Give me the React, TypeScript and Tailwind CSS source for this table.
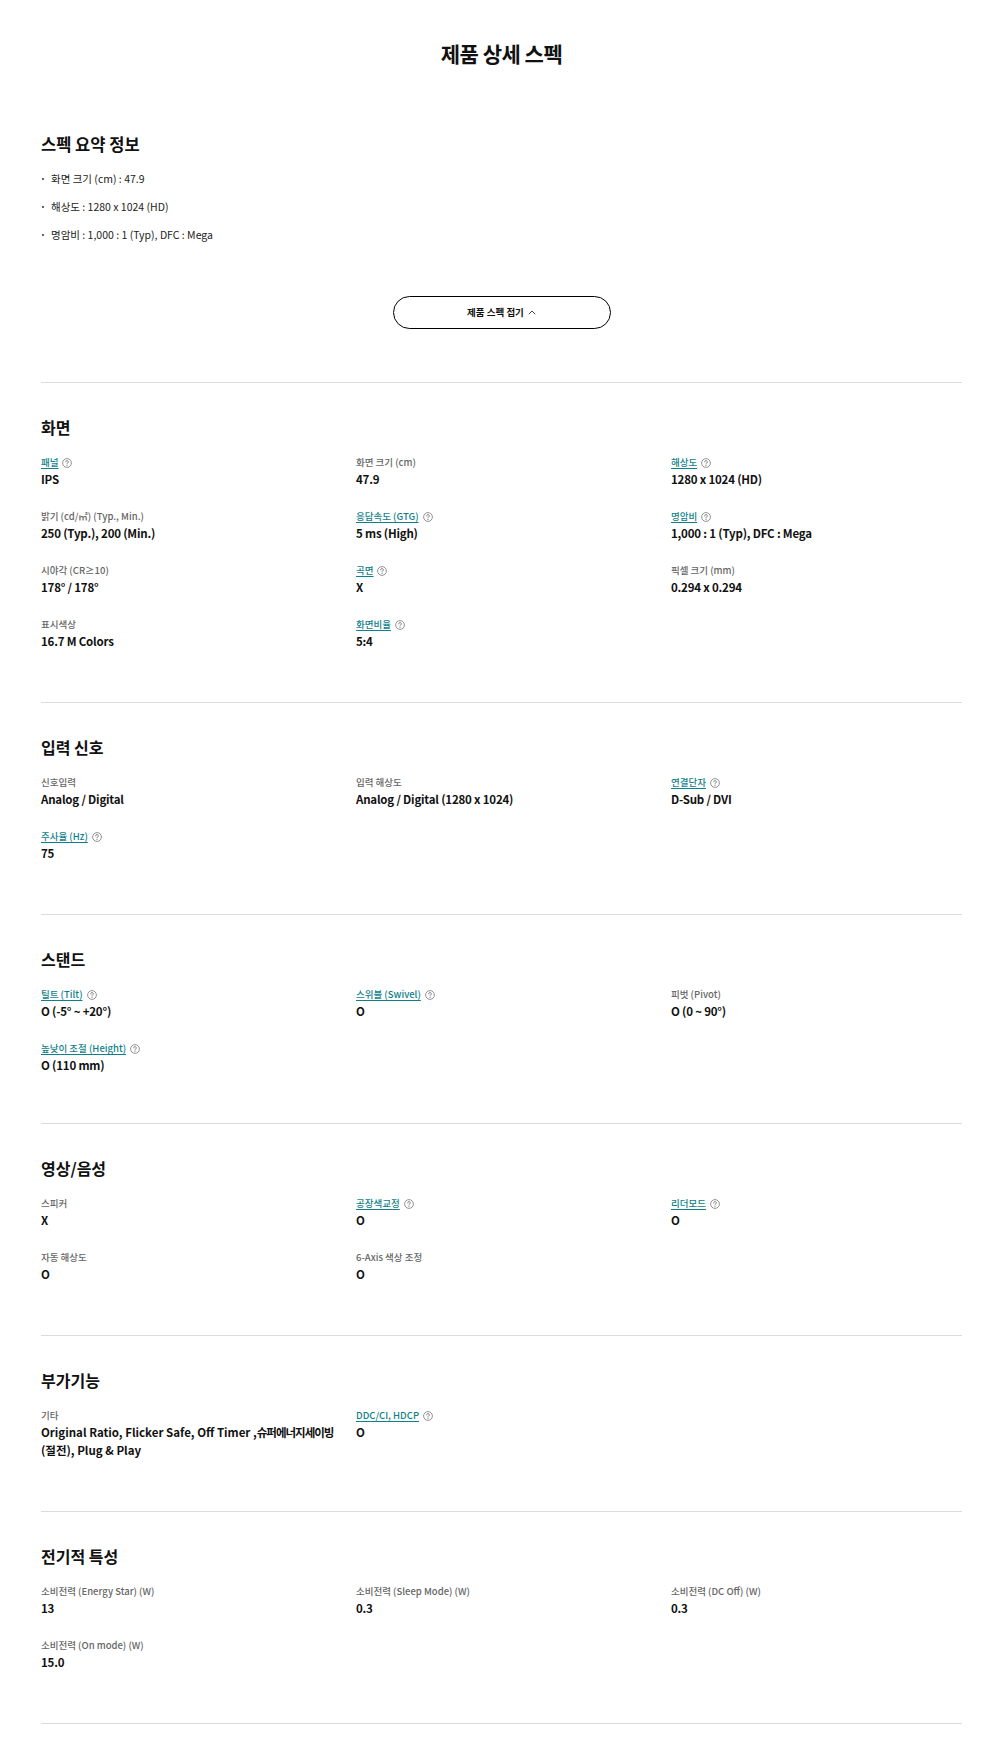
import React from 'react'

type Spec = {
  label: string
  value: string
  link?: boolean
  lines?: React.ReactNode[]
}

type Section = {
  title: string
  specs: Spec[]
  tight?: boolean
}

const summary = [
  '화면 크기 (cm) : 47.9',
  '해상도 : 1280 x 1024 (HD)',
  '명암비 : 1,000 : 1 (Typ), DFC : Mega',
]

const sections: Section[] = [
  {
    title: '화면',
    specs: [
      { label: '패널', value: 'IPS', link: true },
      { label: '화면 크기 (cm)', value: '47.9' },
      { label: '해상도', value: '1280 x 1024 (HD)', link: true },
      { label: '밝기 (cd/㎡) (Typ., Min.)', value: '250 (Typ.), 200 (Min.)' },
      { label: '응답속도 (GTG)', value: '5 ms (High)', link: true },
      { label: '명암비', value: '1,000 : 1 (Typ), DFC : Mega', link: true },
      { label: '시야각 (CR≥10)', value: '178° / 178°' },
      { label: '곡면', value: 'X', link: true },
      { label: '픽셀 크기 (mm)', value: '0.294 x 0.294' },
      { label: '표시색상', value: '16.7 M Colors' },
      { label: '화면비율', value: '5:4', link: true },
    ],
  },
  {
    title: '입력 신호',
    specs: [
      { label: '신호입력', value: 'Analog / Digital' },
      { label: '입력 해상도', value: 'Analog / Digital (1280 x 1024)' },
      { label: '연결단자', value: 'D-Sub / DVI', link: true },
      { label: '주사율 (Hz)', value: '75', link: true },
    ],
  },
  {
    title: '스탠드',
    tight: true,
    specs: [
      { label: '틸트 (Tilt)', value: 'O (-5° ~ +20°)', link: true },
      { label: '스위블 (Swivel)', value: 'O', link: true },
      { label: '피벗 (Pivot)', value: 'O (0 ~ 90°)' },
      { label: '높낮이 조절 (Height)', value: 'O (110 mm)', link: true },
    ],
  },
  {
    title: '영상/음성',
    specs: [
      { label: '스피커', value: 'X' },
      { label: '공장색교정', value: 'O', link: true },
      { label: '리더모드', value: 'O', link: true },
      { label: '자동 해상도', value: 'O' },
      { label: '6-Axis 색상 조정', value: 'O' },
    ],
  },
  {
    title: '부가기능',
    specs: [
      {
        label: '기타',
        value: '',
        lines: [
          <>
            Original Ratio, Flicker Safe, Off Timer ,<span className="tracking-[-1px]">슈퍼에너지세이빙</span>
          </>,
          '(절전), Plug & Play',
        ],
      },
      { label: 'DDC/CI, HDCP', value: 'O', link: true },
    ],
  },
  {
    title: '전기적 특성',
    specs: [
      { label: '소비전력 (Energy Star) (W)', value: '13' },
      { label: '소비전력 (Sleep Mode) (W)', value: '0.3' },
      { label: '소비전력 (DC Off) (W)', value: '0.3' },
      { label: '소비전력 (On mode) (W)', value: '15.0' },
    ],
  },
]

function HelpIcon() {
  return (
    <svg width="10" height="10" viewBox="0 0 10 10" fill="none" className="ml-[4px] shrink-0">
      <circle cx="5" cy="5" r="4.4" stroke="#777" strokeWidth="0.8" />
      <path d="M3.7 3.9a1.3 1.3 0 1 1 1.9 1.1c-.4.2-.6.4-.6.8v.2" stroke="#666" strokeWidth="0.8" strokeLinecap="round" />
      <circle cx="5" cy="7.4" r="0.5" fill="#666" />
    </svg>
  )
}

function SpecItem({ spec }: { spec: Spec }) {
  return (
    <div>
      <div className="flex items-center h-[15px] text-[9.5px] leading-[15px]">
        {spec.link ? (
          <span className="text-[#0f7f8a] underline underline-offset-[2px] font-medium">{spec.label}</span>
        ) : (
          <span className="text-[#666] font-medium">{spec.label}</span>
        )}
        {spec.link && <HelpIcon />}
      </div>
      {spec.lines ? (
        <div className="text-[11.5px] leading-[18px] font-bold text-[#111] whitespace-nowrap">
          {spec.lines.map((l, i) => (
            <div key={i} className="h-[18px]">
              {l}
            </div>
          ))}
        </div>
      ) : (
        <div className="h-[18px] text-[11.5px] leading-[18px] font-bold text-[#111] whitespace-nowrap tracking-[-0.2px]">
          {spec.value}
        </div>
      )}
    </div>
  )
}

export default function App() {
  return (
    <div
      className="min-h-[1744px] bg-white text-[#111] pl-[41px] pr-[38px] pt-[38px]"
      style={{ fontFamily: '"Noto Sans CJK KR", "Noto Sans", sans-serif' }}
    >
      {/* Title */}
      <h1 className="text-center text-[21px] leading-[30px] font-bold tracking-[-0.5px]">제품 상세 스펙</h1>

      {/* Summary */}
      <h2 className="mt-[63px] text-[16.5px] leading-[26px] font-bold">스펙 요약 정보</h2>
      <ul className="mt-[14px] flex flex-col gap-[12px]">
        {summary.map((s) => (
          <li key={s} className="flex items-center h-[16px] text-[10.5px] leading-[16px] text-[#222]">
            <span className="w-[2px] h-[2px] rounded-full bg-[#333] mr-[7px] ml-[1px]" />
            {s}
          </li>
        ))}
      </ul>

      <div className="flex justify-center mt-[53px]">
        <button className="w-[218px] h-[33px] rounded-full border border-black flex items-center justify-center gap-[4px] text-[9.5px] font-bold text-[#111]">
          제품 스펙 접기
          <svg width="8" height="5" viewBox="0 0 8 5" fill="none">
            <path d="M0.8 4.2L4 1L7.2 4.2" stroke="#333" strokeWidth="0.9" />
          </svg>
        </button>
      </div>

      {/* Spec sections */}
      <div className="mt-[53px]">
        {sections.map((sec) => (
          <section
            key={sec.title}
            className={`border-t border-[#dcdcdc] pt-[32px] ${sec.tight ? 'pb-[49px]' : 'pb-[52px]'}`}
          >
            <h3 className="h-[24px] text-[16px] leading-[24px] font-bold">{sec.title}</h3>
            <div className="mt-[16px] grid grid-cols-3 gap-x-6 gap-y-[21px]">
              {sec.specs.map((spec) => (
                <SpecItem key={spec.label} spec={spec} />
              ))}
            </div>
          </section>
        ))}
        <div className="border-t border-[#dcdcdc]" />
      </div>
    </div>
  )
}
